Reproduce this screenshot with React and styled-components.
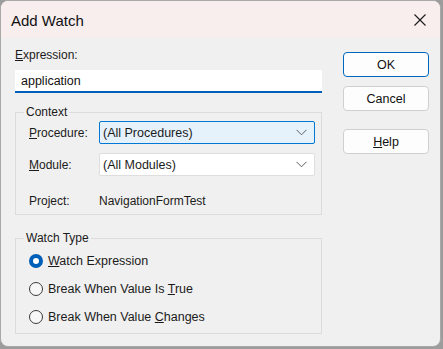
import React from 'react'
import styled, { createGlobalStyle } from 'styled-components'

const Global = createGlobalStyle`
  html, body { margin: 0; padding: 0; background: #9c9c9c; }
  body { font-family: "Liberation Sans", Arial, sans-serif; font-size: 12px; color: #1b1b1b; }
`

function Chevron() {
  return (
    <svg width="11" height="7" viewBox="0 0 11 7">
      <path d="M0.5 0.8 L5.5 5.8 L10.5 0.8" fill="none" stroke="#5f5f5f" strokeWidth="1" />
    </svg>
  )
}

function CloseIcon() {
  return (
    <svg width="12" height="12" viewBox="0 0 12 12">
      <path d="M0.5 0.5 L11.5 11.5 M11.5 0.5 L0.5 11.5" stroke="#1a1a1a" strokeWidth="1.1" />
    </svg>
  )
}

function Radio({ checked, children }) {
  return (
    <RadioRow>
      <RadioDot checked={checked} />
      <span>{children}</span>
    </RadioRow>
  )
}

export default function App() {
  return (
    <>
      <Global />
      <Window>
        <TitleBar>
          <Title>Add Watch</Title>
          <CloseBtn><CloseIcon /></CloseBtn>
        </TitleBar>
        <Body>
          <Main>
            <Label><u>E</u>xpression:</Label>
            <TextInput>application</TextInput>

            <Group>
              <Legend>Context</Legend>
              <FieldRow>
                <FieldLabel><u>P</u>rocedure:</FieldLabel>
                <Combo focused>
                  <span>(All Procedures)</span>
                  <Chevron />
                </Combo>
              </FieldRow>
              <FieldRow>
                <FieldLabel><u>M</u>odule:</FieldLabel>
                <Combo>
                  <span>(All Modules)</span>
                  <Chevron />
                </Combo>
              </FieldRow>
              <ProjectRow>
                <FieldLabel>Project:</FieldLabel>
                <span>NavigationFormTest</span>
              </ProjectRow>
            </Group>

            <WatchGroup>
              <Legend>Watch Type</Legend>
              <Radio checked><u>W</u>atch Expression</Radio>
              <Radio>Break When Value Is <u>T</u>rue</Radio>
              <Radio>Break When Value <u>C</u>hanges</Radio>
            </WatchGroup>
          </Main>

          <Buttons>
            <Button primary>OK</Button>
            <Button>Cancel</Button>
            <Button separated><u>H</u>elp</Button>
          </Buttons>
        </Body>
      </Window>
    </>
  )
}

const Window = styled.div`
  width: 441px;
  height: 347px;
  box-sizing: border-box;
  border: 1px solid #a8a8a8;
  border-radius: 8px;
  overflow: hidden;
  background: #f0f0f0;
  display: flex;
  flex-direction: column;
`

const TitleBar = styled.div`
  height: 37px;
  flex-shrink: 0;
  background: #f8eeee;
  display: flex;
  align-items: center;
  justify-content: space-between;
  padding: 0 14px 0 10px;
`

const Title = styled.div`
  font-size: 15px;
  color: #111;
  margin-top: 1px;
`

const CloseBtn = styled.div`
  display: flex;
  align-items: center;
`

const Body = styled.div`
  flex: 1;
  display: flex;
  padding: 0 0 0 14px;
`

const Main = styled.div`
  width: 307px;
  display: flex;
  flex-direction: column;
  padding-top: 9px;
`

const Label = styled.div`
  line-height: 16px;
  height: 16px;
`

const TextInput = styled.div`
  margin-top: 7px;
  height: 23px;
  box-sizing: border-box;
  background: #fff;
  border-bottom: 2px solid #005fb8;
  padding: 0 6px;
  line-height: 22px;
  font-size: 12.5px;
  color: #111;
`

const Group = styled.fieldset`
  margin: 12px 0 0;
  padding: 0 6px 2px 13px;
  border: 1px solid #dcdcdc;
  min-width: 0;
`

const WatchGroup = styled(Group)`
  margin-top: 16px;
  padding: 6px 6px 6px 13px;
  display: flex;
  flex-direction: column;
  gap: 8px;
`

const Legend = styled.legend`
  padding: 0 2px;
  margin-left: -5px;
  line-height: 14px;
  font-size: 12px;
`

const FieldRow = styled.div`
  display: flex;
  align-items: center;
  height: 23px;
  margin-top: 2px;
  & + & { margin-top: 9px; }
`

const ProjectRow = styled(FieldRow)`
  && { margin-top: 13px; }
`

const FieldLabel = styled.div`
  width: 70px;
  flex-shrink: 0;
`

const Combo = styled.div`
  flex: 1;
  height: 23px;
  box-sizing: border-box;
  display: flex;
  align-items: center;
  justify-content: space-between;
  padding: 0 7px 0 3px;
  border-radius: 2px;
  border: 1px solid ${p => (p.focused ? '#0078d4' : '#dedede')};
  background: ${p => (p.focused ? '#e5f1fb' : '#fff')};
  font-size: 12.5px;
`

const RadioRow = styled.div`
  display: flex;
  align-items: center;
  gap: 5px;
  height: 20px;
  font-size: 12.5px;
`

const RadioDot = styled.span`
  width: 14px;
  height: 14px;
  box-sizing: border-box;
  border-radius: 50%;
  flex-shrink: 0;
  border: ${p => (p.checked ? '4px solid #005fb8' : '1px solid #3a3a3a')};
  background: ${p => (p.checked ? '#fff' : '#f7f7f7')};
`

const Buttons = styled.div`
  margin-left: 21px;
  width: 86px;
  padding-top: 14px;
  display: flex;
  flex-direction: column;
  gap: 9px;
`

const Button = styled.div`
  height: 25px;
  box-sizing: border-box;
  display: flex;
  align-items: center;
  justify-content: center;
  margin-top: ${p => (p.separated ? '9px' : '0')};
  background: #fdfdfd;
  border-radius: 4px;
  border: 1px solid ${p => (p.primary ? '#0067c0' : '#d0d0d0')};
  font-size: 12.5px;
  color: #111;
`
